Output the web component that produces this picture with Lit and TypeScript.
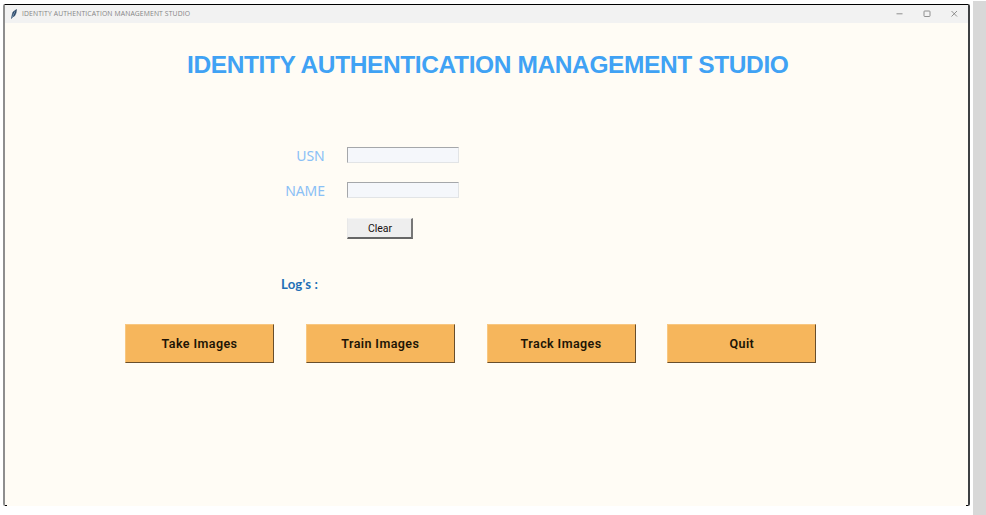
import { LitElement, html, css } from "lit";
import { customElement } from "lit/decorators.js";

@customElement("app-root")
export class AppRoot extends LitElement {
  static styles = css`
    :host { display: flex; justify-content: space-between; box-sizing: border-box; width: 986px; height: 515px; background: #fff; overflow: hidden; }
    * { box-sizing: border-box; }
    .window { display: flex; flex-direction: column; width: 967px; height: 502px; margin: 4px 0 0 3px; background: linear-gradient(#000, #000) 0 100% / 2px 2px no-repeat, linear-gradient(#000, #000) 100% 100% / 2px 2px no-repeat, #fffcf5; border-top: 1px solid #000; border-left: 2px solid #8e8e8e; border-right: 2px solid #3e4042; border-radius: 2px; }
    .rail { width: 13px; margin-top: 1px; background: #d8d8d8; }
    .titlebar { display: flex; align-items: center; height: 18px; flex: none; background: #f2f2f2; }
    .feather { width: 8px; height: 10px; margin-left: 5px; }
    .caption { margin: 0 auto 0 4px; font: 6.8px/10px "Open Sans", "Noto Sans", sans-serif; letter-spacing: 0.12px; color: #858585; white-space: nowrap; }
    .controls { display: flex; width: 66px; height: 10px; margin-right: 7px; }
    .content { background: #fffcf5; flex: 1; display: flex; flex-direction: column; margin-bottom: 1px; }
    h1 { margin: 26px 0 0 182px; font: bold 24.5px/32px "Liberation Sans", Arial, sans-serif; letter-spacing: -0.39px; color: #40a2f4; white-space: nowrap; }
    .form { display: grid; grid-template-columns: 60px 112px; column-gap: 12px; margin: 66px 0 0 270px; grid-template-rows: 16px 16px 21px; row-gap: 19px; align-items: center; }
    label { font: 14px/18px "Noto Sans", sans-serif; letter-spacing: -0.1px; color: #8ac0f5; text-align: center; padding-top: 1px; }
    label.short { padding-left: 11px; }
    input { width: 112px; height: 16px; margin: 0; padding: 0 3px; background: #f5f7fb; border: 1px solid #e2e4e6; border-top-color: #a5a7aa; border-left-color: #a5a7aa; border-radius: 0; outline: 0; }
    .clear { grid-column: 2; width: 66px; height: 21px; padding: 1px 0 0 1px; margin-top: 2px; background: #eee; color: #171010; border: solid; border-width: 1px 2px 2px 1px; border-color: #f5f5f5 #777 #666 #e8e8e8; font: 10.5px/16px Roboto, sans-serif; }
    .log { margin: 37px 0 0 276px; font: bold 13.2px/18px Lato, sans-serif; letter-spacing: 0.15px; color: #226fb5; }
    .actions { display: flex; gap: 31.8px; margin: 31px 0 0 120px; }
    .action { width: 149px; height: 39px; padding: 1px 0 0; background: #f6b65c; border: solid; border-width: 1px 1.5px 1.5px 1px; border-color: #f8c780 #684e2c #684e2c #f8c780; color: #201405; font: 600 12.5px/34px Roboto, sans-serif; letter-spacing: 0.42px; }
  `;

  render() {
    return html`
      <main class="window">
        <header class="titlebar">
          <svg class="feather" viewBox="0 0 8 10">
            <path d="M1.5 9.5 2 6.5 3 3 6.5.5 6 4 4.5 7 2.4 8Z" fill="#294564" stroke="#294564" stroke-width=".6" />
            <path d="M2 8.8 5 2.4" stroke="#8eaac8" stroke-width=".7" />
          </svg>
          <span class="caption">IDENTITY AUTHENTICATION MANAGEMENT STUDIO</span>
          <svg class="controls" viewBox="0 0 66 10" fill="none" stroke="#777" stroke-width=".8">
            <path d="M1.5 4.8H7.5M56.5 2 62 7.5M62 2 56.5 7.5" />
            <rect x="29" y="2" width="6" height="5.5" rx=".7" />
          </svg>
        </header>
        <section class="content">
          <h1>IDENTITY AUTHENTICATION MANAGEMENT STUDIO</h1>
          <div class="form">
            <label class="short" for="usn">USN</label><input id="usn" />
            <label for="name">NAME</label><input id="name" />
            <button class="clear">Clear</button>
          </div>
          <div class="log">Log's :</div>
          <div class="actions">
            ${["Take Images", "Train Images", "Track Images", "Quit"].map(
              (text) => html`<button class="action">${text}</button>`
            )}
          </div>
        </section>
      </main>
      <aside class="rail"></aside>
    `;
  }
}
